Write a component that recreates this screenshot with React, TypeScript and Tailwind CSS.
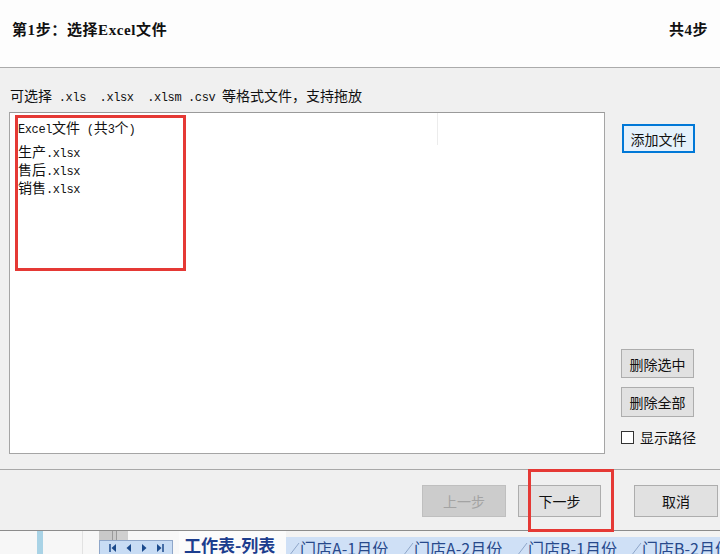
import type { ReactNode } from 'react'

const cjk = "font-['Noto_Sans_CJK_SC',sans-serif]"

// half-width latin, SimSun style
function Lat({ children }: { children: ReactNode }) {
  return (
    <span className="font-['Liberation_Mono',monospace] text-[12px] tracking-[-0.4px] leading-none">
      {children}
    </span>
  )
}

function Btn({
  children,
  focused = false,
  disabled = false,
  className = '',
}: {
  children: ReactNode
  focused?: boolean
  disabled?: boolean
  className?: string
}) {
  const look = disabled
    ? 'bg-[#cccccc] border border-[#bfbfbf] text-[#a3a3a3]'
    : focused
      ? 'bg-[#e5f1fb] border-2 border-[#0078d7] text-[#111]'
      : 'bg-[#e1e1e1] border border-[#adadad] text-[#111]'
  return (
    <button className={`flex items-center justify-center text-[14px] leading-none ${look} ${className}`}>
      {children}
    </button>
  )
}

function SheetTab({ label }: { label: string }) {
  return (
    <div className="flex items-start w-[114px] shrink-0 h-full">
      <svg width="14" height="23" viewBox="0 0 14 23" className="shrink-0">
        <path d="M0 23 L13 6" stroke="#8ea6c9" strokeWidth="1" fill="none" />
      </svg>
      <span className="pt-[3px] text-[16px] leading-none text-[#27498c] whitespace-nowrap">{label}</span>
    </div>
  )
}

export default function App() {
  return (
    <div className={`relative w-[720px] h-[554px] overflow-hidden flex flex-col bg-[#f0f0f0] text-[#111] ${cjk}`}>
      {/* Header */}
      <div className="h-[68px] shrink-0 bg-[#fdfdfd] border-b border-[#ababab] flex items-start justify-between pt-[20px] pl-[12px] pr-[12px]">
        <div className="font-['Liberation_Serif','Noto_Sans_CJK_SC',serif] font-bold text-[15px] tracking-[0.6px] leading-[20px]">
          第1步：选择Excel文件
        </div>
        <div className="font-['Liberation_Serif','Noto_Sans_CJK_SC',serif] font-semibold text-[15px] leading-[20px] tracking-[0.5px]">
          共4步
        </div>
      </div>

      {/* Body */}
      <div className="h-[401px] shrink-0 flex">
        <div className="ml-[9px] w-[596px] pt-[18px]">
          <div className="h-[18px] leading-[18px] text-[14px] whitespace-pre pl-[1px]">
            可选择<Lat> .xls  .xlsx  .xlsm .csv </Lat>等格式文件，支持拖放
          </div>
          <div className="relative mt-[8px] h-[342px] bg-white border border-[#a5a5a5] border-t-[#9a9a9a] pt-[5px] pl-[8px] text-[14px]">
            <div className="absolute left-[427px] top-0 w-px h-[32px] bg-[#ececec]" />
            <div className="h-[18px] leading-[18px] mb-[6px] whitespace-pre">
              <Lat>Excel</Lat>文件<Lat> (</Lat>共<Lat>3</Lat>个<Lat>)</Lat>
            </div>
            {['生产', '售后', '销售'].map((name) => (
              <div key={name} className="h-[18px] leading-[18px]">
                {name}
                <Lat>.xlsx</Lat>
              </div>
            ))}
            {/* annotation */}
            <div className="absolute left-[5px] top-[2px] w-[171px] h-[156px] border-[3px] border-[#e53935]" />
          </div>
        </div>

        <div className="ml-[16px] w-[90px] pt-[56px] flex flex-col items-start">
          <Btn focused className="h-[29px] w-[73px] ml-[1px]">添加文件</Btn>
          <Btn className="mt-[196px] h-[29px] w-[73px]">删除选中</Btn>
          <Btn className="mt-[9px] h-[30px] w-[73px]">删除全部</Btn>
          <label className="mt-[13px] flex items-center h-[14px] text-[14px] whitespace-nowrap">
            <span className="w-[13px] h-[13px] bg-white border border-[#333] shrink-0" />
            <span className="ml-[6px] leading-none">显示路径</span>
          </label>
        </div>
      </div>

      {/* Footer */}
      <div className="h-[62px] shrink-0 border-t border-b border-[#a8a8a8] border-b-[#8c8c8c] flex items-start justify-end pt-[15px] pr-[2px]">
        <Btn disabled className="h-[32px] w-[84px]">上一步</Btn>
        <Btn className="ml-[12px] h-[32px] w-[83px]">下一步</Btn>
        <Btn className="ml-[33px] h-[32px] w-[84px]">取消</Btn>
      </div>
      <div className="absolute left-[528px] top-[469px] w-[86px] h-[63px] border-[3px] border-[#e53935]" />

      {/* Excel sheet tab strip behind the dialog */}
      <div className="h-[23px] shrink-0 flex bg-[#f7f7f7] overflow-hidden font-['Noto_Sans_CJK_SC',sans-serif]">
        <div className="w-[37px] shrink-0" />
        <div className="w-[6px] shrink-0 bg-[#a9d3e6]" />
        <div className="w-[39px] shrink-0" />
        <div className="w-px shrink-0 bg-[#e2e2e2]" />
        <div className="w-[16px] shrink-0" />
        <div className="w-[74px] shrink-0 flex flex-col">
          <div className="h-[9px] flex">
            <div className="w-[14px] bg-[#c9c9c9] border-r border-[#9a9a9a]" />
            <div className="w-[4px] bg-[#c9c9c9] border-r border-[#9a9a9a]" />
            <div className="w-[11px] bg-[#cfcfcf]" />
          </div>
          <div className="flex-1 bg-[#c8dcf4] border border-b-0 border-[#8ea6c9] flex items-center justify-around px-[4px] text-[#1b4a8c]">
            <svg width="8" height="8" viewBox="0 0 8 8"><path d="M1 0v8" stroke="currentColor" strokeWidth="1.5" /><path d="M7 0v8L2.5 4z" fill="currentColor" /></svg>
            <svg width="6" height="8" viewBox="0 0 6 8"><path d="M5 0v8L0.5 4z" fill="currentColor" /></svg>
            <svg width="6" height="8" viewBox="0 0 6 8"><path d="M1 0v8L5.5 4z" fill="currentColor" /></svg>
            <svg width="8" height="8" viewBox="0 0 8 8"><path d="M7 0v8" stroke="currentColor" strokeWidth="1.5" /><path d="M1 0v8L5.5 4z" fill="currentColor" /></svg>
          </div>
        </div>
        <div className="w-[6px] shrink-0" />
        <div className="w-[107px] shrink-0 bg-[#fbfbfb] pl-[5px] pt-[5px] text-[17px] leading-none font-bold text-[#1c3d8e] whitespace-nowrap">
          工作表-列表
        </div>
        <div className="flex-1 flex pt-[6px] bg-[#f3f3f3]">
          <div className="flex h-full bg-[#cfe0f6]">
            {['门店A-1月份', '门店A-2月份', '门店B-1月份', '门店B-2月份'].map((t) => (
              <SheetTab key={t} label={t} />
            ))}
          </div>
        </div>
      </div>
    </div>
  )
}
